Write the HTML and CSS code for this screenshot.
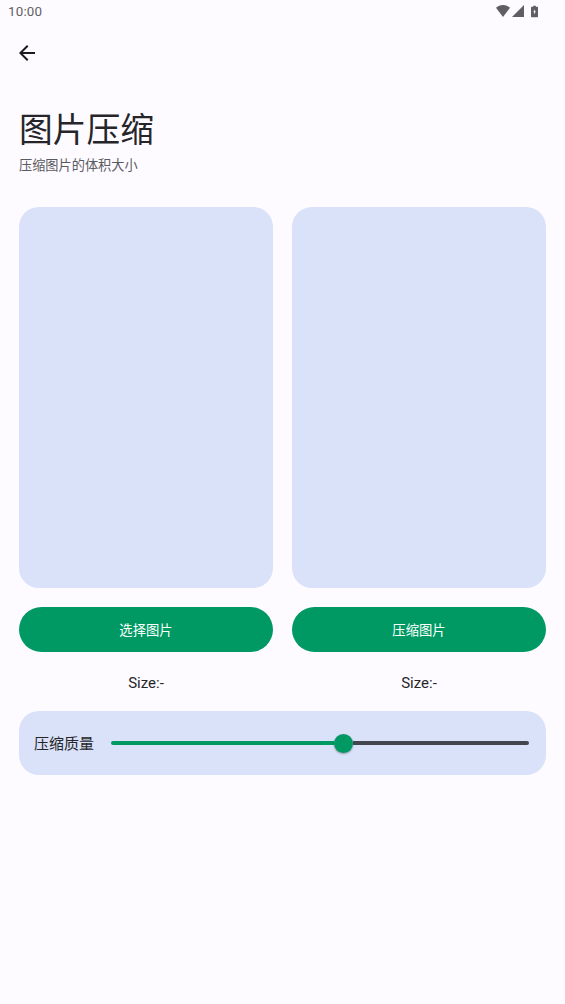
FILE: index.html
```html
<!DOCTYPE html>
<html lang="zh-CN">
<head>
<meta charset="utf-8">
<title>图片压缩</title>
<link rel="stylesheet" href="styles.css">
</head>
<body>
<div class="statusbar">
  <span class="time">10:00</span>
  <div class="status-icons">
    <svg class="ic-wifi" width="14" height="12" viewBox="0 0 14 12"><path d="M0 2.8C1.8 1.1 4.2 0 7 0s5.2 1.1 7 2.8L7 12z" fill="#5f5f63"/></svg>
    <svg class="ic-signal" width="12" height="12" viewBox="0 0 12 12"><path d="M12 0v12H0z" fill="#5f5f63"/></svg>
    <svg class="ic-battery" width="7" height="13" viewBox="0 0 8 13"><path d="M2.5 0h3v1.2H7.2c.4 0 .8.4.8.8v10.2c0 .4-.4.8-.8.8H.8c-.4 0-.8-.4-.8-.8V2c0-.4.4-.8.8-.8h1.7z" fill="#5f5f63"/><path d="M4.4 3.5 2.6 7.4h1.2v2.4l1.7-3.6H4.3z" fill="#fdfbff"/></svg>
  </div>
</div>
<div class="topbar">
  <svg width="24" height="24" viewBox="0 0 24 24"><path d="M20 11H7.83l5.59-5.59L12 4l-8 8 8 8 1.41-1.41L7.83 13H20z" fill="#1b1b1f"/></svg>
</div>
<header class="header">
  <h1 class="title">图片压缩</h1>
  <p class="subtitle">压缩图片的体积大小</p>
</header>
<main class="content">
  <section class="columns">
    <div class="col">
      <div class="preview"></div>
      <button class="btn">选择图片</button>
      <div class="size">Size:-</div>
    </div>
    <div class="col">
      <div class="preview"></div>
      <button class="btn">压缩图片</button>
      <div class="size">Size:-</div>
    </div>
  </section>
  <section class="quality">
    <span class="quality-label">压缩质量</span>
    <div class="slider">
      <div class="track-on"></div>
      <div class="thumb"></div>
      <div class="track-off"></div>
    </div>
  </section>
</main>
</body>
</html>
```
FILE: styles.css
```css
* { box-sizing: border-box; }
html, body { margin: 0; padding: 0; }
body {
  width: 565px;
  height: 1004px;
  overflow: hidden;
  background: #fdfbff;
  color: #26262a;
  font-family: Roboto, "Noto Sans CJK SC", sans-serif;
}
.statusbar {
  height: 22px;
  padding: 0 27px 0 8px;
  display: flex;
  align-items: center;
  justify-content: space-between;
}
.time { font-size: 13.33px; color: #5f5f63; letter-spacing: .2px; }
.status-icons { display: flex; align-items: center; gap: 2px; }
.ic-battery { margin-left: 5px; }
.topbar {
  height: 60px;
  padding: 2px 0 0 15px;
  display: flex;
  align-items: center;
}
.header { padding: 0 19px; margin-top: 26px; }
.title {
  margin: 0;
  font-weight: 400;
  font-size: 33.75px;
  line-height: 46px;
}
.subtitle {
  margin: 2px 0 0;
  font-size: 13.2px;
  line-height: 20px;
  color: #5a5a60;
}
.content { padding: 0 19px; margin-top: 31px; }
.columns { display: flex; gap: 19px; }
.col { flex: 1; display: flex; flex-direction: column; }
.preview {
  height: 381px;
  border-radius: 20px;
  background: #d9e2f9;
}
.btn {
  margin-top: 19px;
  height: 45px;
  border: 0;
  border-radius: 23px;
  background: #009963;
  color: #fff;
  font-family: inherit;
  font-size: 13.33px;
}
.size {
  margin-top: 21px;
  text-align: center;
  font-size: 15px;
  line-height: 20px;
}
.quality {
  margin-top: 18px;
  height: 64px;
  border-radius: 20px;
  background: #d9e2f9;
  display: flex;
  align-items: center;
  padding: 0 17px 0 15px;
}
.quality-label { font-size: 15px; width: 62px; flex: none; margin-bottom: 2px; }
.slider {
  flex: 1;
  margin-left: 15px;
  display: flex;
  align-items: center;
}
.track-on {
  width: 222.5px;
  height: 4px;
  background: #009963;
  border-radius: 2px 0 0 2px;
}
.thumb {
  flex: none;
  width: 19px;
  height: 19px;
  border-radius: 50%;
  background: #009963;
  box-shadow: 0 1px 2px rgba(0,0,0,.35);
}
.track-off {
  flex: 1;
  height: 4px;
  background: #44464f;
  border-radius: 0 2px 2px 0;
}
```
